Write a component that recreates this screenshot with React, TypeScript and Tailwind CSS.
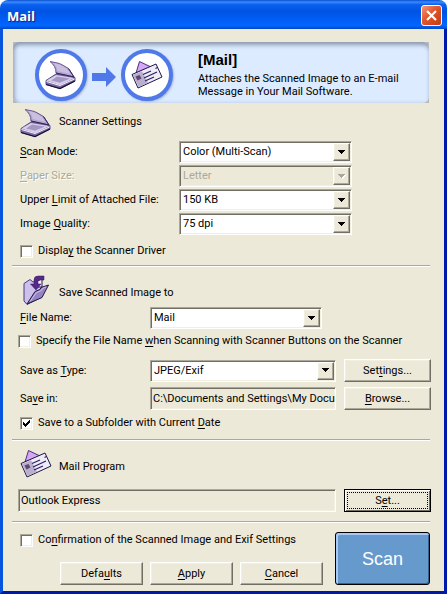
import type { ReactNode } from "react";

const TEXT = "font-['Roboto','Liberation_Sans',sans-serif] text-[11px] leading-4";
const SUNKEN =
  "border border-t-[#aca899] border-l-[#aca899] border-b-white border-r-white shadow-[inset_1px_1px_0_#716f64,inset_-1px_-1px_0_#f1efe2]";
const RAISED =
  "border border-t-white border-l-white border-b-[#716f64] border-r-[#716f64] bg-[#ece9d8] shadow-[inset_-1px_-1px_0_#aca899,inset_1px_1px_0_#f1efe2]";

function Key({ children }: { children: ReactNode }) {
  return <span className="underline underline-offset-2">{children}</span>;
}

function ScannerIcon({ className }: { className: string }) {
  return (
    <svg viewBox="0 0 32 30" className={className} aria-hidden="true">
      <path d="M1 20.500 11 14 30 17.500V21L15 28.500 1 24.500Z" fill="#7a6aa0" stroke="#5b4b86" />
      <path d="M1.500 20.500 11 15 29.500 18 15 25Z" fill="#d9d1ec" />
      <path d="M6 20.500 12 16.500 25 18.500 15 22.800Z" fill="#a497c4" />
      <path d="M1.500 21.500 15 25.500 29.500 19" fill="none" stroke="#f8f5ff" />
      <path d="M1 24.500 15 28.500 30 21" fill="none" stroke="#171032" strokeWidth="1.300" />
      <path d="M5 1.500Q15 2 23.500 8.500L29 17 11 13Q11 6 5 1.500Z" fill="#b5a6d0" stroke="#6a5a92" />
      <path d="M8 3Q16 4 22 9L25.500 14 12.500 11Q12 6 8 3Z" fill="#cbbfdf" />
      <path d="M23.500 8.500 29 17 11 13" fill="none" stroke="#33245c" />
    </svg>
  );
}

function MailIcon({ className }: { className: string }) {
  return (
    <svg viewBox="0 0 32 30" className={className} aria-hidden="true">
      <path d="M5 13 8.500 1.500 20 7Z" fill="#d6a8f4" stroke="#4b2d83" />
      <path d="M1 14.500 25 4 31 17 7 28Z" fill="#efecf8" stroke="#1d1648" />
      <path d="M2 15 11 11.200 17 22.800 7.500 27Z" fill="#b9aecb" />
      <path d="M4.500 16.500 8.500 15 10.500 18.500 6.500 20.500Z" fill="#5d4776" />
      <path d="m12 14.500 8-3.500M13 18l13-6M14 21l9-4M24.500 8.500l2-1" stroke="#2b2266" strokeWidth="1.300" />
    </svg>
  );
}

function FolderIcon({ className }: { className: string }) {
  return (
    <svg viewBox="0 0 32 32" className={className} aria-hidden="true">
      <path d="M4 8.500 10 4.500 13 7 21 5 22 22 7 29.500 4 26Z" fill="#cdc0ea" stroke="#4a3a80" />
      <path d="M17 6 22 4V12H17Z" fill="#f4f0ff" stroke="#241747" />
      <path d="M7 29 15 16.500 20 14.500 21 12.500 28.500 10 22 22.500Z" fill="#9683c2" stroke="#241747" />
      <path d="M10 26.500 16.500 17.500 21.500 15.500 22.500 13.500 26 12" fill="none" stroke="#cfc3ea" />
      <path d="M24 1h-6q-4 0-4 4v4h-3.500l5.500 6 5-6h-3V6q0-1 2-1h4Z" fill="#552a86" stroke="#3b1768" strokeWidth=".5" />
    </svg>
  );
}

function Combo({
  id,
  value,
  className = "",
  disabled = false,
}: {
  id: string;
  value: string;
  className?: string;
  disabled?: boolean;
}) {
  return (
    <div className={`relative ${className}`}>
      <select
        id={id}
        disabled={disabled}
        className={`block h-[22px] w-full appearance-none pr-5 pl-[3px] opacity-100 outline-none ${SUNKEN} ${
          disabled ? "bg-[#ece9d8] text-[#aca899]" : "bg-white text-black"
        }`}
      >
        <option>{value}</option>
      </select>
      <span
        className={`pointer-events-none absolute top-0.5 right-0.5 flex h-[18px] w-[17px] items-center justify-center ${RAISED}`}
      >
        <svg viewBox="0 0 8 5" className="h-[5px] w-2" shapeRendering="crispEdges" aria-hidden="true">
          {disabled && <path d="M1 1h7v1H7v1H6v1H5v1H4V4H3V3H2V2H1z" fill="#fff" />}
          <path d="M0 0h7v1H6v1H5v1H4v1H3V3H2V2H1V1H0z" fill={disabled ? "#aca899" : "#000"} />
        </svg>
      </span>
    </div>
  );
}

function Check({
  checked = false,
  children,
  className = "",
}: {
  checked?: boolean;
  children: ReactNode;
  className?: string;
}) {
  return (
    <label className={`flex items-center gap-[5px] ${className}`}>
      <span className="grid">
        <input
          type="checkbox"
          defaultChecked={checked}
          className={`peer col-start-1 row-start-1 h-[13px] w-[13px] appearance-none bg-white ${SUNKEN}`}
        />
        <svg
          viewBox="0 0 13 13"
          className="pointer-events-none invisible col-start-1 row-start-1 h-[13px] w-[13px] peer-checked:visible"
          shapeRendering="crispEdges"
          aria-hidden="true"
        >
          <path d="M3 5h1v1h1v1h1V6h1V5h1V4h1V3h1v3H9v1H8v1H7v1H6v1H5V9H4V8H3z" />
        </svg>
      </span>
      <span>{children}</span>
    </label>
  );
}

function Button({ children, className = "w-[87px]" }: { children: ReactNode; className?: string }) {
  return (
    <button type="button" className={`h-[23px] shrink-0 ${RAISED} ${className}`}>
      {children}
    </button>
  );
}

function Divider() {
  return <hr className="h-0.5 border-t border-b border-t-[#aca899] border-b-white" />;
}

export default function App() {
  return (
    <div className={`bg-[#ece9d8] text-black ${TEXT}`}>
      <div className="bg-white">
        <header className="flex h-[29px] items-center justify-between rounded-t-lg bg-[linear-gradient(#0a4fd0_0%,#3a8bff_7%,#0a5fee_16%,#0054e3_40%,#0060fa_75%,#0066ff_88%,#0047c8_100%)] pt-0.5 pr-[5px] pl-[7px]">
          <h1 className="font-['Open_Sans',sans-serif] text-[13px] font-bold text-white [text-shadow:1px_1px_1px_#0a1f80]">
            Mail
          </h1>
          <button
            type="button"
            aria-label="Close"
            className="grid h-[21px] w-[21px] place-items-center rounded-[3px] border border-white bg-[linear-gradient(135deg,#f0967a,#e0552c_45%,#c23c12)]"
          >
            <svg viewBox="0 0 11 11" className="h-[11px] w-[11px]" aria-hidden="true">
              <path d="m1 1 9 9M10 1l-9 9" stroke="#fff" strokeWidth="2.200" />
            </svg>
          </button>
        </header>
      </div>

      <main className="border-x-[3px] border-b-[3px] border-r-[#0019a8] border-b-[#0019a8] border-l-[#0855dd] pt-[13px] pr-[14px] pb-1.5 pl-[9px]">
        <section className="mr-px ml-px flex h-[61px] items-center bg-[#b8b8b8]">
          <div className="flex h-full w-full items-center rounded-md bg-[#dcebff] pl-[22px] shadow-[inset_0_4px_4px_-1px_#8d9bb0,inset_3px_0_4px_-1px_#a3b1c6]">
            <div className="mt-1 grid h-[52px] w-[52px] shrink-0 place-items-center rounded-full border-4 border-[#4f78e8] bg-white shadow-[1px_1px_2px_#a9b9d4]">
              <ScannerIcon className="h-[30px] w-8" />
            </div>
            <svg viewBox="0 0 24 20" className="mx-[5px] mt-2 h-5 w-6 shrink-0" aria-hidden="true">
              <path d="M0 6h14V0l10 10-10 10v-6H0Z" fill="#4f78e8" />
            </svg>
            <div className="mt-1 grid h-[52px] w-[52px] shrink-0 place-items-center rounded-full border-4 border-[#4f78e8] bg-white shadow-[1px_1px_2px_#a9b9d4]">
              <MailIcon className="h-[30px] w-8" />
            </div>
            <div className="ml-[25px] pt-1">
              <h2 className="font-['Liberation_Sans',sans-serif] text-[15px] font-bold">[Mail]</h2>
              <p className="mt-1 leading-[13px]">
                Attaches the Scanned Image to an E-mail
                <br />
                Message in Your Mail Software.
              </p>
            </div>
          </div>
        </section>

        <section className="pt-[5px] pb-1.5 pl-2">
          <div className="flex h-[33px] gap-[7px]">
            <ScannerIcon className="h-[30px] w-8 shrink-0" />
            <h2 className="pt-1.5">Scanner Settings</h2>
          </div>
          <div className="mr-[78px] grid grid-cols-[159px_1fr] items-center gap-y-0.5">
            <label htmlFor="mode"><Key>S</Key>can Mode:</label>
            <Combo id="mode" value="Color (Multi-Scan)" />
            <label htmlFor="paper" className="text-[#aca899] [text-shadow:1px_1px_0_#fff]"><Key>P</Key>aper Size:</label>
            <Combo id="paper" value="Letter" disabled />
            <label htmlFor="limit">Upper <Key>L</Key>imit of Attached File:</label>
            <Combo id="limit" value="150 KB" />
            <label htmlFor="quality">Image <Key>Q</Key>uality:</label>
            <Combo id="quality" value="75 dpi" />
          </div>
          <Check className="mt-2">Displa<Key>y</Key> the Scanner Driver</Check>
        </section>
        <Divider />

        <section className="pt-2 pb-2 pl-2">
          <div className="flex h-8 gap-[7px]">
            <FolderIcon className="h-8 w-8 shrink-0" />
            <h2 className="pt-2.5">Save Scanned Image to</h2>
          </div>
          <div className="flex items-center">
            <label htmlFor="name" className="w-[130px]"><Key>F</Key>ile Name:</label>
            <Combo id="name" value="Mail" className="w-[172px]" />
          </div>
          <Check className="mt-1 -ml-0.5">Specify the File Name <Key>w</Key>hen Scanning with Scanner Buttons on the Scanner</Check>
          <div className="mt-2.5 -mr-px flex items-center">
            <label htmlFor="type" className="w-[130px] shrink-0">Save as <Key>T</Key>ype:</label>
            <Combo id="type" value="JPEG/Exif" className="mr-2 flex-1" />
            <Button>Set<Key>t</Key>ings...</Button>
          </div>
          <div className="mt-[5px] -mr-px flex items-center">
            <label htmlFor="folder" className="w-[130px] shrink-0">Sa<Key>v</Key>e in:</label>
            <input id="folder" readOnly defaultValue="C:\Documents and Settings\My Docu" className={`mr-2 h-[23px] min-w-0 flex-1 bg-[#ece9d8] pl-0.5 ${SUNKEN}`} />
            <Button><Key>B</Key>rowse...</Button>
          </div>
          <Check checked className="mt-[5px]">Save to a Subfolder with Current <Key>D</Key>ate</Check>
        </section>
        <Divider />

        <section className="pt-2 pb-[9px] pl-1.5">
          <div className="flex h-10 gap-[7px] pl-0.5">
            <MailIcon className="h-[30px] w-8 shrink-0" />
            <h2 className="pt-2.5">Mail Program</h2>
          </div>
          <div className="-mr-px flex">
            <input aria-label="Mail Program" readOnly defaultValue="Outlook Express" className={`mr-2 h-[23px] min-w-0 flex-1 bg-[#ece9d8] px-0.5 ${SUNKEN}`} />
            <button type="button" className="h-[23px] w-[87px] border border-black p-0.5 shadow-[inset_1px_1px_0_#fff,inset_-1px_-1px_0_#716f64]">
              <span className="flex h-full items-center justify-center border border-dotted border-black">S<Key>e</Key>t...</span>
            </button>
          </div>
        </section>
        <Divider />

        <section className="flex justify-between pt-[9px] pl-2">
          <div className="flex flex-col justify-between">
            <Check>Co<Key>n</Key>firmation of the Scanned Image and Exif Settings</Check>
            <div className="flex gap-[7px] pl-10">
              <Button className="w-[83px]">Defa<Key>u</Key>lts</Button>
              <Button className="w-[83px]"><Key>A</Key>pply</Button>
              <Button className="w-[83px]"><Key>C</Key>ancel</Button>
            </div>
          </div>
          <button type="button" className="h-[53px] w-[95px] shrink-0 rounded-[3px] border border-black bg-[#6699cc] font-['Liberation_Sans',sans-serif] text-[18px] text-white shadow-[inset_1px_1px_0_#a9c8f5,inset_2px_2px_0_#a9c8f5,inset_-1px_-1px_0_#35618f]">
            Scan
          </button>
        </section>
      </main>
    </div>
  );
}
